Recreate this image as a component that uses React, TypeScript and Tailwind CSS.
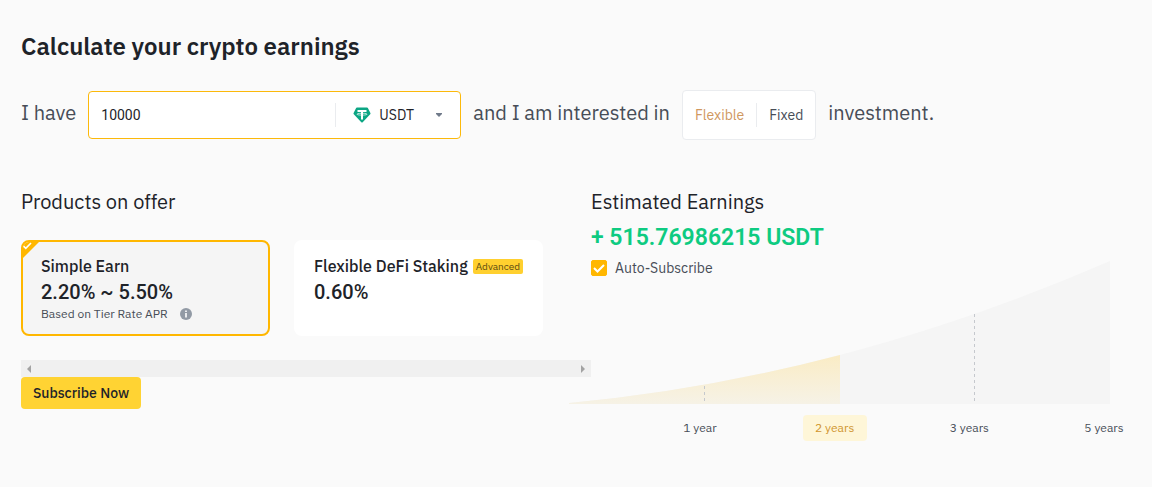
import { useState } from "react";

type TProduct = {
  id: string;
  name: string;
  rate: string;
  note?: string;
  tag?: string;
};

const products: TProduct[] = [
  {
    id: "simple-earn",
    name: "Simple Earn",
    rate: "2.20% ~ 5.50%",
    note: "Based on Tier Rate APR",
  },
  {
    id: "defi-staking",
    name: "Flexible DeFi Staking",
    rate: "0.60%",
    tag: "Advanced",
  },
];

const periods = ["1 year", "2 years", "3 years", "5 years"];

const TetherIcon = () => (
  <svg viewBox="0 0 18 16" className="h-4 w-[18px] shrink-0" aria-hidden="true">
    <path d="M4 .5h10a1 1 0 0 1 .9.5l2.5 5a1 1 0 0 1-.2 1.2l-7.500 8a1 1 0 0 1-1.400 0l-7.500-8A1 1 0 0 1 .6 6L3.1 1A1 1 0 0 1 4 .5z" fill="#0ca684" />
    <path d="M4.500 3h9v2H10v7.500H8V5H4.500z" fill="#fff" />
    <path d="M8 6.300c-2.600.1-4 .4-4 .9s1.400.8 4 .9M10 6.300c2.600.1 4 .4 4 .9s-1.400.8-4 .9" fill="none" stroke="#fff" strokeWidth=".7" />
  </svg>
);

const InfoIcon = () => (
  <svg viewBox="0 0 12 12" className="size-3" aria-hidden="true">
    <circle cx="6" cy="6" r="6" fill="#929aa5" />
    <path d="M5.2 2.5h1.6v1.6H5.2zM5.2 5h1.6v4.5H5.2z" fill="#fff" />
  </svg>
);

type ProductCardProps = {
  product: TProduct;
  selected: boolean;
  onSelect: () => void;
};

const ProductCard = ({ product, selected, onSelect }: ProductCardProps) => {
  const { id, name, rate, note, tag } = product;
  return (
    <label
      htmlFor={id}
      className={`relative h-24 w-[249px] shrink-0 cursor-pointer overflow-hidden rounded-lg border-2 px-[18px] py-3 ${
        selected ? "border-[#ffb700] bg-[#f5f5f5]" : "border-white bg-white"
      }`}
    >
      <input
        type="radio"
        id={id}
        name="product"
        checked={selected}
        onChange={onSelect}
        className="sr-only"
      />
      {selected && (
        <svg viewBox="0 0 16 16" className="absolute top-0 left-0 size-4" aria-hidden="true">
          <path d="M0 0h16L0 16z" fill="#ffb700" />
          <path d="M.5 4l2.300 2.300L8 1" fill="none" stroke="#fff" strokeWidth="1.6" />
        </svg>
      )}
      <span className="flex items-center justify-between text-base leading-6 font-medium text-[#1e2329]">
        {name}
        {tag && (
          <span className="rounded-xs bg-[#ffd02f] px-[3px] text-[10px] leading-[15px] font-normal text-[#5c4a12]">
            {tag}
          </span>
        )}
      </span>
      <span className="block font-[Roboto,sans-serif] text-xl leading-7 font-medium text-[#1e2329]">
        {rate}
      </span>
      {note && (
        <span className="flex items-center gap-3 text-xs leading-4 text-[#474d57]">
          {note}
          <InfoIcon />
        </span>
      )}
    </label>
  );
};

const EarningsChart = () => (
  <svg
    viewBox="0 0 541 143"
    preserveAspectRatio="none"
    className="block h-[143px] w-full"
    aria-hidden="true"
  >
    <defs>
      <linearGradient id="earned" x1="0" y1="0" x2="0" y2="1">
        <stop offset="0" stopColor="#faecc5" />
        <stop offset="1" stopColor="#f6f2e6" />
      </linearGradient>
    </defs>
    <path d="M0 142Q270.5 117 541 0V143H0z" fill="#f5f5f5" />
    <path d="M0 142Q135.25 129.5 271 94V143H0z" fill="url(#earned)" />
    <path d="M135.5 125V143M405.5 53V143" stroke="#c5c8cd" strokeDasharray="3 3" />
  </svg>
);

const App = () => {
  const [amount, setAmount] = useState("10000");
  const [coin, setCoin] = useState("USDT");
  const [term, setTerm] = useState("Flexible");
  const [product, setProduct] = useState("simple-earn");
  const [period, setPeriod] = useState("2 years");
  const [autoSubscribe, setAutoSubscribe] = useState(true);

  return (
    <main className="min-h-screen bg-[#fafafa] pt-[30px] pr-4 pb-11 pl-[21px] font-['IBM_Plex_Sans',Roboto,sans-serif] text-[#1e2329]">
      <h1 className="text-2xl leading-8 font-semibold">Calculate your crypto earnings</h1>

      <div className="mt-7 flex flex-wrap items-center gap-3 text-xl text-[#474d57]">
        <label htmlFor="amount" className="pb-1">
          I have
        </label>
        <div className="flex h-12 w-[373px] items-center rounded-sm border border-[#fcb90b] bg-white text-sm text-[#1e2329]">
          <input
            id="amount"
            type="text"
            value={amount}
            onChange={(e) => setAmount(e.target.value)}
            className="min-w-0 flex-1 px-3 font-[Roboto,sans-serif] outline-none"
          />
          <div className="relative flex h-6 w-[125px] items-center border-l border-[#eaecef] pl-[17px]">
            <TetherIcon />
            <select
              aria-label="Coin"
              value={coin}
              onChange={(e) => setCoin(e.target.value)}
              className="h-full flex-1 appearance-none pl-2 outline-none"
            >
              <option>USDT</option>
            </select>
            <svg viewBox="0 0 8 6" className="pointer-events-none absolute right-[17px] h-1.5 w-2" aria-hidden="true">
              <path d="M1 1h6v1L4 5 1 2z" fill="#707a8a" />
            </svg>
          </div>
        </div>
        <span className="pb-1">and I am interested in</span>
        <div className="flex h-[50px] items-center rounded-sm border border-[#eaecef] bg-white text-sm">
          {["Flexible", "Fixed"].map((item) => (
            <button
              key={item}
              type="button"
              onClick={() => setTerm(item)}
              className={`h-6 cursor-pointer px-3 first:border-r first:border-[#eaecef] ${
                term === item ? "text-[#d0985f]" : "text-[#474d57]"
              }`}
            >
              {item}
            </button>
          ))}
        </div>
        <span className="pb-1">investment.</span>
      </div>

      <div className="mt-12 grid grid-cols-[570fr_545fr]">
        <section>
          <h2 className="text-xl leading-7">Products on offer</h2>
          <div className="mt-6 flex gap-6 pb-6">
            {products.map((item) => (
              <ProductCard
                key={item.id}
                product={item}
                selected={product === item.id}
                onSelect={() => setProduct(item.id)}
              />
            ))}
          </div>
          <div className="flex h-[17px] items-center justify-between bg-[#f0f0f0] px-1.5">
            <button type="button" aria-label="Scroll left">
              <svg viewBox="0 0 4 8" className="h-2 w-1" aria-hidden="true">
                <path d="M4 0v8L0 4z" fill="#a3a3a3" />
              </svg>
            </button>
            <button type="button" aria-label="Scroll right">
              <svg viewBox="0 0 4 8" className="h-2 w-1" aria-hidden="true">
                <path d="M0 0v8l4-4z" fill="#a3a3a3" />
              </svg>
            </button>
          </div>
          <button
            type="button"
            className="block h-8 w-[120px] cursor-pointer rounded-sm bg-[#ffd333] text-sm font-medium"
          >
            Subscribe Now
          </button>
        </section>

        <section>
          <h2 className="text-xl leading-7">Estimated Earnings</h2>
          <p className="mt-1.5 font-[Roboto,sans-serif] text-[23px] leading-8 font-semibold text-[#0ecb81]">
            + 515.76986215 USDT
          </p>
          <label className="mt-1.5 flex h-4 items-center gap-2 text-sm text-[#474d57]">
            <span className="relative size-4">
              <input
                type="checkbox"
                checked={autoSubscribe}
                onChange={(e) => setAutoSubscribe(e.target.checked)}
                className="block size-4 appearance-none rounded-xs border border-[#ffb700] checked:bg-[#ffb700]"
              />
              <svg viewBox="0 0 16 16" className="pointer-events-none absolute inset-0 size-4" aria-hidden="true">
                <path d="M3 8l3.500 3.500L13 5" fill="none" stroke="#fff" strokeWidth="2" />
              </svg>
            </span>
            Auto-Subscribe
          </label>
          <div className="-mt-[15px] mr-[26px] -ml-[22px]">
            <EarningsChart />
          </div>
          <div className="mt-[11px] ml-[77px] flex justify-between">
            {periods.map((item) => (
              <button
                key={item}
                type="button"
                onClick={() => setPeriod(item)}
                className={`h-[26px] w-16 cursor-pointer rounded-sm text-xs ${
                  period === item ? "bg-[#fef6d8] text-[#d0952f]" : "text-[#474d57]"
                }`}
              >
                {item}
              </button>
            ))}
          </div>
        </section>
      </div>
    </main>
  );
};

export default App;
